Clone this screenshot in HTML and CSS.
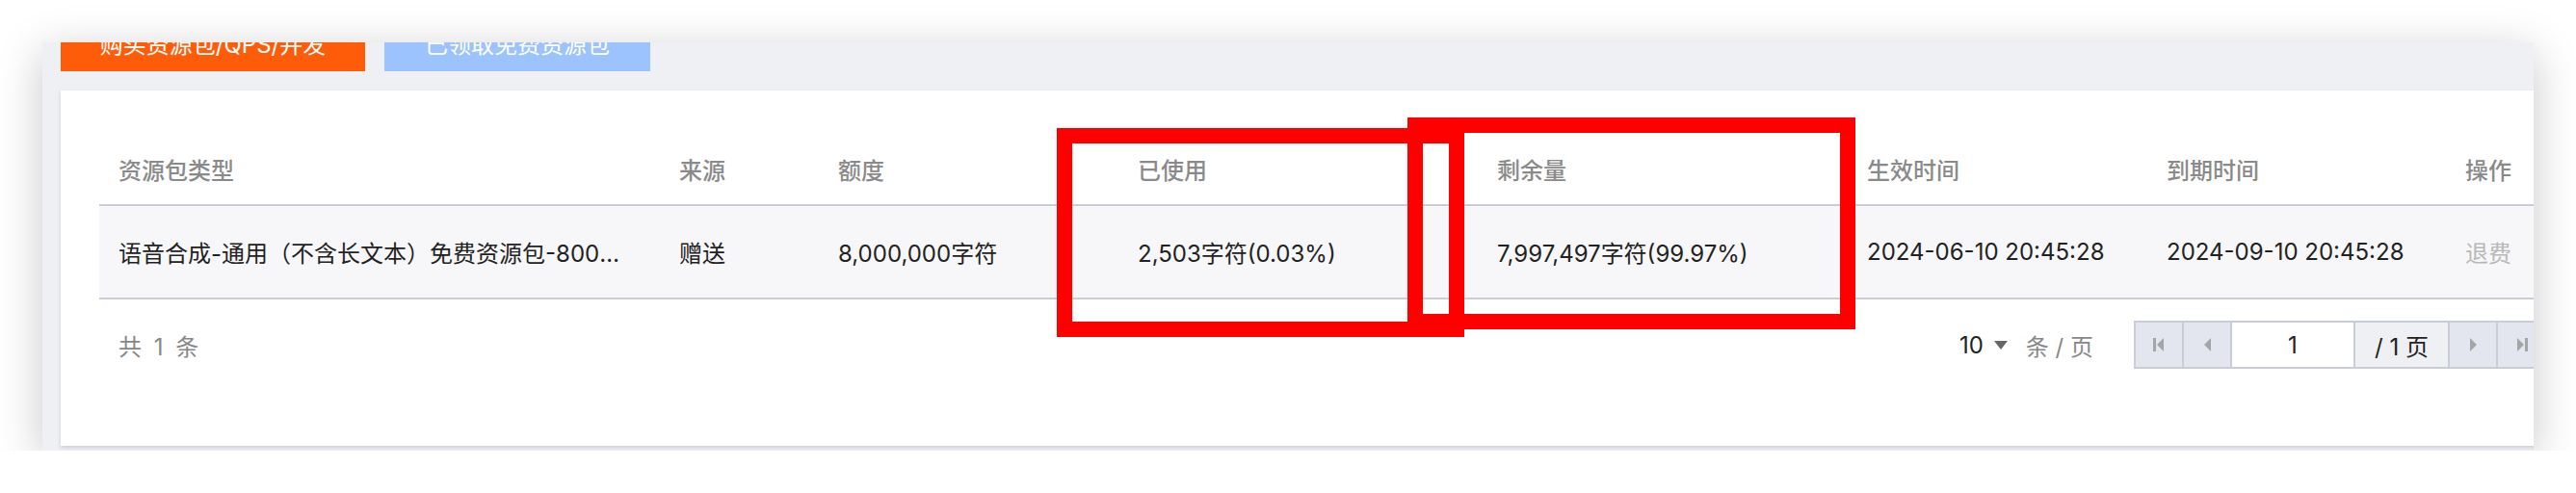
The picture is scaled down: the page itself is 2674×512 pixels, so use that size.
FILE: index.html
```html
<!DOCTYPE html>
<html lang="zh-CN">
<head>
  <meta charset="UTF-8">
  <title>资源包管理</title>
  <link rel="stylesheet" href="styles.css">
</head>
<body>
  <div class="shot">
    <div class="toolbar">
      <button class="btn btn-buy">购买资源包/QPS/并发</button>
      <button class="btn btn-free">已领取免费资源包</button>
    </div>

    <div class="card">
      <table class="pkg-table">
        <colgroup>
          <col style="width: 582px">
          <col style="width: 165px">
          <col style="width: 311px">
          <col style="width: 373px">
          <col style="width: 384px">
          <col style="width: 311px">
          <col style="width: 310px">
          <col style="width: 106px">
        </colgroup>
        <thead>
          <tr>
            <th>资源包类型</th>
            <th>来源</th>
            <th>额度</th>
            <th>已使用</th>
            <th>剩余量</th>
            <th>生效时间</th>
            <th>到期时间</th>
            <th>操作</th>
          </tr>
        </thead>
        <tbody>
          <tr>
            <td class="ellipsis">语音合成-通用（不含长文本）免费资源包-8000000字符</td>
            <td>赠送</td>
            <td>8,000,000字符</td>
            <td>2,503字符(0.03%)</td>
            <td>7,997,497字符(99.97%)</td>
            <td>2024-06-10 20:45:28</td>
            <td>2024-09-10 20:45:28</td>
            <td><a class="link-disabled">退费</a></td>
          </tr>
        </tbody>
      </table>

      <div class="footer">
        <span class="total">共 1 条</span>
        <div class="pager">
          <span class="page-size">10</span>
          <i class="caret"></i>
          <span class="unit">条 / 页</span>
          <div class="pages">
            <span class="pg-btn">
              <svg width="12" height="14" viewBox="0 0 12 14"><rect x="0" y="0" width="3" height="14"/><path d="M11 0 L4 7 L11 14 Z"/></svg>
            </span>
            <span class="pg-btn">
              <svg width="9" height="14" viewBox="0 0 9 14"><path d="M8 0 L1 7 L8 14 Z"/></svg>
            </span>
            <input class="pg-input" type="text" value="1">
            <span class="pg-total">/ 1 页</span>
            <span class="pg-btn">
              <svg width="9" height="14" viewBox="0 0 9 14"><path d="M1 0 L8 7 L1 14 Z"/></svg>
            </span>
            <span class="pg-btn">
              <svg width="12" height="14" viewBox="0 0 12 14"><path d="M1 0 L8 7 L1 14 Z"/><rect x="9" y="0" width="3" height="14"/></svg>
            </span>
          </div>
        </div>
      </div>
    </div>
  </div>

  <div class="mark mark-used"></div>
  <div class="mark mark-left"></div>
</body>
</html>
```

FILE: styles.css
```css
* {
  box-sizing: border-box;
}

body {
  margin: 0;
  background: #fff;
  font-family: Inter, "Noto Sans CJK SC", sans-serif;
  font-size: 24px;
  color: #222;
  overflow: hidden;
}

.shot {
  margin: 44px 0 0 44px;
  width: 2586px;
  height: 424px;
  overflow: hidden;
  background-color: #eff0f4;
  padding-left: 19px;
  box-shadow: 0 10px 44px rgba(0, 0, 0, 0.22);
}

.toolbar {
  display: flex;
  gap: 20px;
  margin-top: -30px;
}

.btn {
  height: 60px;
  border: none;
  color: #fff;
  font-family: inherit;
  font-size: 24px;
  padding: 0;
}

.btn-buy {
  width: 316px;
  background-color: #ff5c0a;
}

.btn-free {
  width: 276px;
  background-color: #9cc3fd;
}

.card {
  margin-top: 20px;
  width: 2622px;
  height: 369px;
  background-color: #fff;
  padding: 45px 40px 0;
  box-shadow: 0 2px 4px rgba(40, 50, 90, 0.18);
}

.pkg-table {
  width: 2542px;
  table-layout: fixed;
  border-collapse: collapse;
}

.pkg-table th {
  height: 74px;
  padding: 0 20px;
  text-align: left;
  font-weight: 500;
  color: #8a8a8a;
  border-bottom: 2px solid #c9cdd9;
}

.pkg-table td {
  height: 97px;
  padding: 0 20px;
  background-color: #f7f7f9;
  border-bottom: 2px solid #c9cdd9;
  white-space: nowrap;
}

.pkg-table td.ellipsis {
  overflow: hidden;
  text-overflow: ellipsis;
  padding-right: 38px;
}

.link-disabled {
  color: #b8b8b8;
}

.footer {
  display: flex;
  justify-content: space-between;
  align-items: center;
  margin-top: 22px;
  height: 50px;
}

.total {
  padding-left: 20px;
  color: #888;
  word-spacing: 6px;
}

.pager {
  display: flex;
  align-items: center;
}

.caret {
  width: 0;
  height: 0;
  margin-left: 11px;
  border-left: 7px solid transparent;
  border-right: 7px solid transparent;
  border-top: 9px solid #666;
}

.unit {
  margin-left: 19px;
  color: #888;
}

.pages {
  display: flex;
  margin-left: 42px;
  height: 50px;
  border: 2px solid #c9cdd9;
}

.pg-btn {
  width: 50px;
  display: flex;
  align-items: center;
  justify-content: center;
  background-color: #e3e6ee;
  border-right: 2px solid #c9cdd9;
  fill: #a5a5a5;
}

.pg-btn:last-child {
  border-right: none;
}

.pg-input {
  width: 128px;
  border: none;
  border-right: 2px solid #c9cdd9;
  text-align: center;
  font-family: inherit;
  font-size: 24px;
  color: #222;
  padding: 0;
  outline: none;
}

.pg-total {
  width: 98px;
  display: flex;
  align-items: center;
  justify-content: center;
  background-color: #eff0f4;
  border-right: 2px solid #c9cdd9;
}

.mark {
  position: absolute;
  border: 16px solid #ff0000;
}

.mark-used {
  left: 1097px;
  top: 133px;
  width: 423px;
  height: 217px;
}

.mark-left {
  left: 1461px;
  top: 122px;
  width: 465px;
  height: 220px;
}
```
